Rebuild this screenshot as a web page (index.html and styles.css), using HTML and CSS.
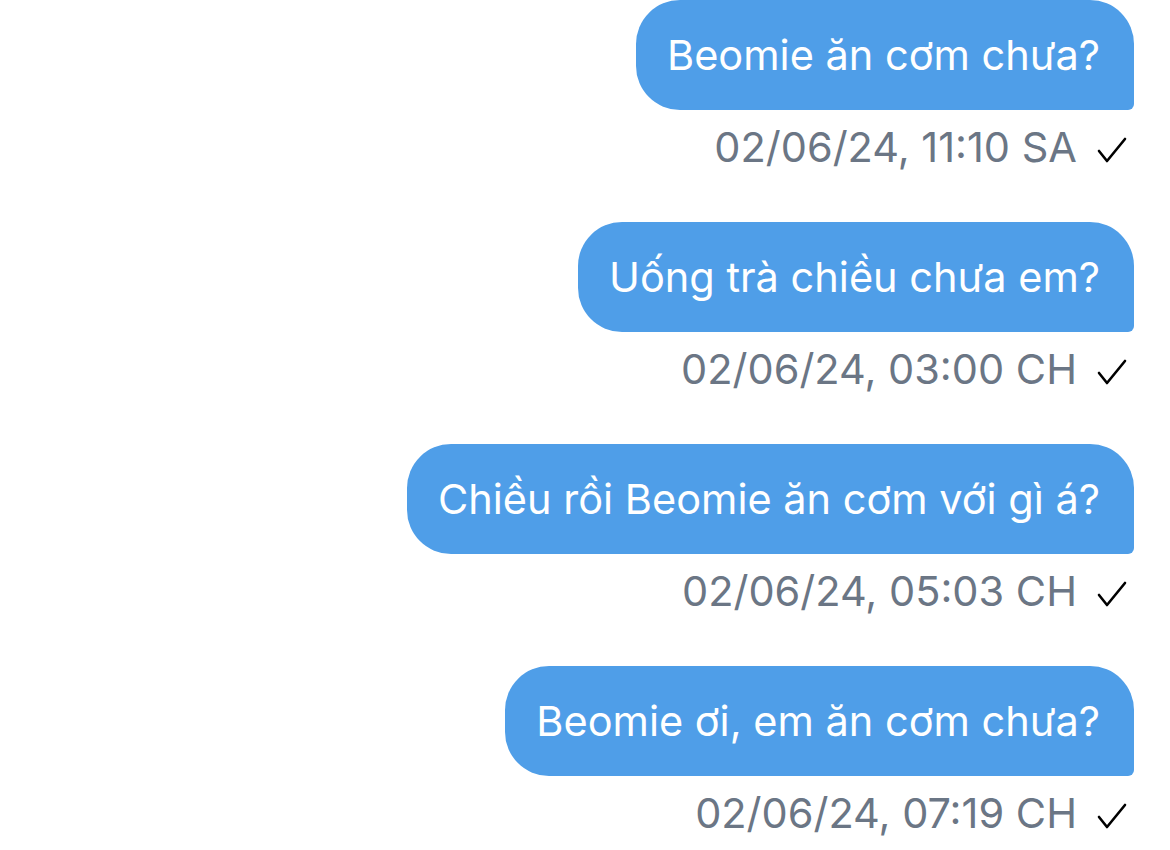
FILE: index.html
```html
<!DOCTYPE html>
<html lang="vi">
<head>
  <meta charset="UTF-8">
  <title>Tin nhắn</title>
  <link rel="stylesheet" href="styles.css">
</head>
<body>

<div class="chat">
  <div class="message">
    <div class="bubble">Beomie ăn cơm chưa?</div>
    <div class="meta">
      <span class="time">02/06/24, 11:10 SA</span>
      <svg class="check" viewBox="0 0 30 26"><polyline points="2,14 10,24 28,2" /></svg>
    </div>
  </div>

  <div class="message">
    <div class="bubble">Uống trà chiều chưa em?</div>
    <div class="meta">
      <span class="time">02/06/24, 03:00 CH</span>
      <svg class="check" viewBox="0 0 30 26"><polyline points="2,14 10,24 28,2" /></svg>
    </div>
  </div>

  <div class="message">
    <div class="bubble">Chiều rồi Beomie ăn cơm với gì á?</div>
    <div class="meta">
      <span class="time">02/06/24, 05:03 CH</span>
      <svg class="check" viewBox="0 0 30 26"><polyline points="2,14 10,24 28,2" /></svg>
    </div>
  </div>

  <div class="message">
    <div class="bubble">Beomie ơi, em ăn cơm chưa?</div>
    <div class="meta">
      <span class="time">02/06/24, 07:19 CH</span>
      <svg class="check" viewBox="0 0 30 26"><polyline points="2,14 10,24 28,2" /></svg>
    </div>
  </div>
</div>

</body>
</html>
```

FILE: styles.css
```css
/* Chat thread, outgoing messages only */
body {
  margin: 0;
  background-color: #ffffff;
  font-family: Inter, "Noto Sans", sans-serif;
}

.chat {
  display: flex;
  flex-direction: column;
  align-items: flex-end;
  gap: 38px;
  padding: 0 36px 0 0;
}

.message {
  display: flex;
  flex-direction: column;
  align-items: flex-end;
}

.bubble {
  height: 110px;
  display: flex;
  align-items: center;
  padding: 0 34px 0 31px;
  background-color: #4f9ee8;
  color: #ffffff;
  font-size: 41.5px;
  border-radius: 44px 44px 6px 44px;
}

.meta {
  display: flex;
  align-items: center;
  gap: 20px;
  height: 74px;
  padding-right: 7px;
}

.time {
  color: #6b7685;
  font-size: 41.5px;
}

.check {
  width: 30px;
  height: 26px;
  margin-top: 6px;
}

.check polyline {
  fill: none;
  stroke: #000000;
  stroke-width: 2.6;
  stroke-linecap: round;
  stroke-linejoin: round;
}
```
